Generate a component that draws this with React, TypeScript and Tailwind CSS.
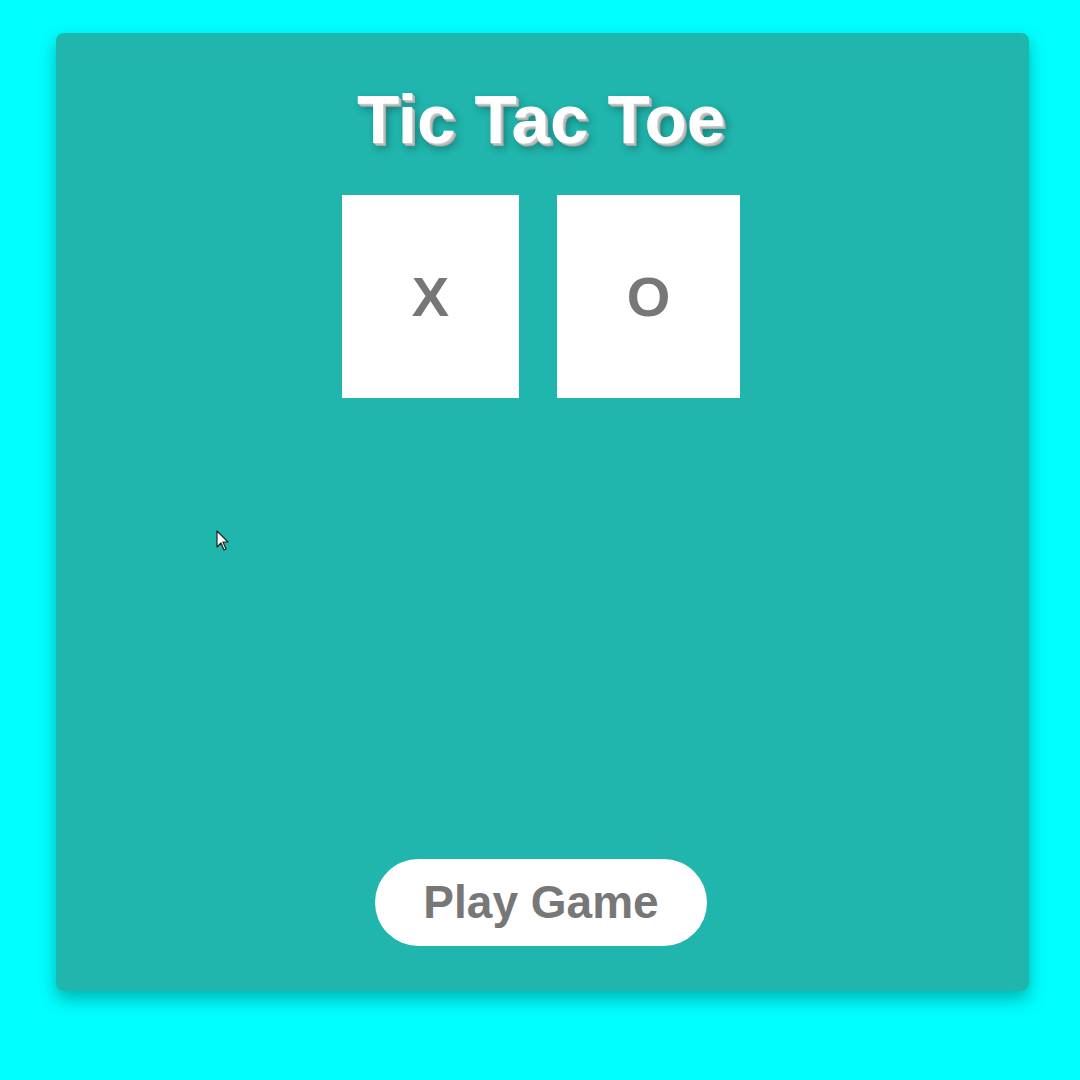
const cells = [
  { mark: 'X', width: 'w-[177px]' },
  { mark: 'O', width: 'w-[183px]' },
];

function Cursor() {
  return (
    <svg className="absolute left-[216px] top-[530px]" width="14" height="22" viewBox="0 0 14 22">
      <path d="M1 1 L1 17 L5 13 L8 20 L10 19 L7 12 L12 12 Z" fill="#fff" stroke="#222" strokeWidth="1.2" strokeLinejoin="round" />
    </svg>
  );
}

export default function App() {
  return (
    <div className="relative h-[1080px] w-[1080px] bg-[#00ffff] pl-[56px] pt-[33px] font-['Liberation_Sans',Arial,sans-serif]">
      <div className="flex h-[958px] w-[973px] flex-col items-center rounded-lg bg-[#20b5ad] pb-[45px] pr-[3px] pt-[47px] shadow-[0_8px_18px_rgba(0,0,0,0.3)]">
        <h1 className="text-[69px] font-bold leading-[80px] text-white [text-shadow:1px_1px_0_#ccc,2px_2px_0_#bbb,3px_3px_0_#aaa,4px_5px_8px_rgba(0,0,0,0.35)]">
          Tic Tac Toe
        </h1>
        <div className="mt-[35px] flex gap-[38px]">
          {cells.map((c) => (
            <div key={c.mark} className={`flex h-[203px] ${c.width} items-center justify-center bg-white`}>
              <span className="text-[56px] font-bold text-[#777]">{c.mark}</span>
            </div>
          ))}
        </div>
        <button className="mt-auto flex h-[87px] w-[332px] items-center justify-center rounded-full bg-white text-[46px] font-bold text-[#777]">
          Play Game
        </button>
      </div>
      <Cursor />
    </div>
  );
}
